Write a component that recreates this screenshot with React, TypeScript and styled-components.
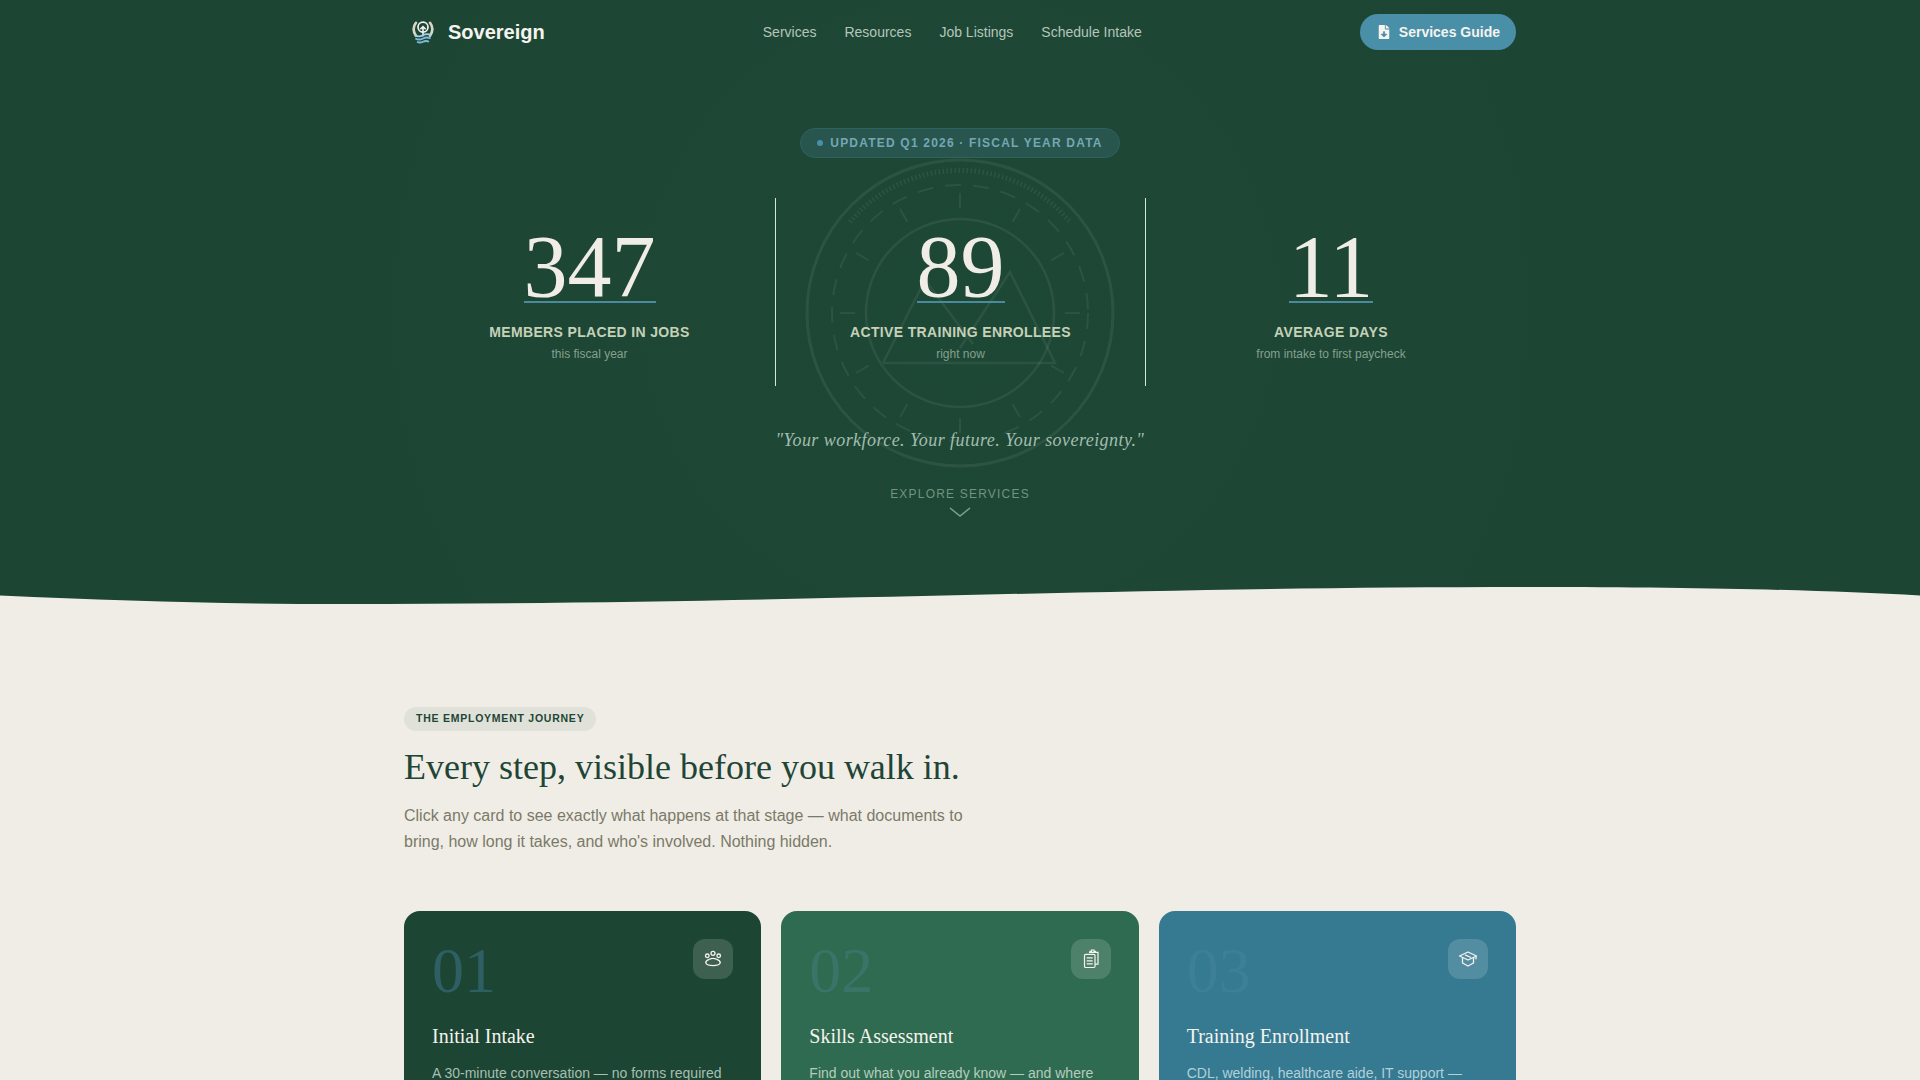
import { Fragment } from "react";
import styled, { createGlobalStyle } from "styled-components";
import { FaFileDownload } from "react-icons/fa";

const GlobalStyle = createGlobalStyle`
  html, body { margin: 0; padding: 0; height: 100%; overflow: hidden; background: #f0ede6; }
  body { font-family: "Liberation Sans", Arial, sans-serif; }
  * { box-sizing: border-box; }
`;

const Page = styled.div`
  height: 1080px;
  overflow: hidden;
  background: #f0ede6;
`;

const Hero = styled.header`
  position: relative;
  height: 620px;
  background: radial-gradient(circle at 50% 50%, #1e4836 0, #1d4534 60%);
  overflow: hidden;
`;

const Seal = styled.svg`
  position: absolute;
  top: 158px;
  left: 50%;
  margin-left: -155px;
  width: 310px;
  height: 310px;
`;

const Wave = styled.svg`
  position: absolute;
  left: 0;
  bottom: 0;
  width: 100%;
  height: 40px;
  display: block;
`;

const Wrap = styled.div`
  position: relative;
  width: 1112px;
  margin: 0 auto;
`;

const Nav = styled.nav`
  height: 64px;
  display: flex;
  align-items: center;
  justify-content: space-between;
`;

const Brand = styled.a`
  display: flex;
  align-items: center;
  gap: 12px;
  padding-left: 6px;
  font-size: 20px;
  font-weight: 700;
  color: #f5f3ee;
`;

const NavLinks = styled.div`
  display: flex;
  gap: 28px;
`;

const NavLink = styled.a`
  font-size: 14px;
  color: #b4c6ba;
`;

const GuideButton = styled.a`
  height: 36px;
  display: flex;
  align-items: center;
  gap: 8px;
  padding: 0 16px 0 17px;
  border-radius: 18px;
  background: #4a8fa8;
  color: #f5f3ee;
  font-size: 14px;
  font-weight: 700;
`;

const BadgeRow = styled.div`
  display: flex;
  justify-content: center;
  margin-top: 64px;
`;

const Badge = styled.div`
  height: 30px;
  display: flex;
  align-items: center;
  gap: 7px;
  padding: 0 16px;
  border-radius: 15px;
  background: #28564f;
  border: 1px solid #2e625c;
  color: #74a7b2;
  font-size: 12px;
  font-weight: 700;
  letter-spacing: 1.2px;
`;

const Dot = styled.span`
  width: 6px;
  height: 6px;
  border-radius: 50%;
  background: #4a8fa8;
`;

const Stats = styled.section`
  display: grid;
  grid-template-columns: 371px 1px 369px 1px 370px;
  height: 188px;
  margin-top: 40px;
`;

const Divider = styled.div`
  background: #d5e6dc;
`;

const Stat = styled.div`
  display: flex;
  flex-direction: column;
  align-items: center;
  padding-top: 25px;
`;

const Number = styled.div`
  position: relative;
  font-family: "Liberation Serif", "Times New Roman", serif;
  font-size: 88px;
  line-height: 88px;
  color: #f0ede6;

  &::after {
    content: "";
    position: absolute;
    left: 0;
    right: 0;
    bottom: 8px;
    height: 2px;
    background: #4a8a9e;
  }
`;

const StatLabel = styled.div`
  margin-top: 11px;
  font-size: 14px;
  line-height: 20px;
  font-weight: 700;
  letter-spacing: 0.34px;
  color: #c5d1b8;
`;

const StatNote = styled.div`
  margin-top: 3px;
  font-size: 12px;
  line-height: 18px;
  color: #84a090;
`;

const Quote = styled.p`
  margin: 42px 0 0;
  text-align: center;
  font-family: "Liberation Serif", "Times New Roman", serif;
  font-style: italic;
  font-size: 18px;
  line-height: 24px;
  letter-spacing: 0.45px;
  color: #a3bdae;
`;

const Explore = styled.div`
  display: flex;
  flex-direction: column;
  align-items: center;
  gap: 5px;
  margin-top: 34px;
  font-size: 12px;
  line-height: 16px;
  letter-spacing: 1.2px;
  color: #72937f;
`;

const Journey = styled.main`
  padding-top: 87px;
`;

const Pill = styled.div`
  display: inline-block;
  height: 24px;
  padding: 0 12px;
  border-radius: 12px;
  background: #e0e1d9;
  color: #1e4535;
  font-size: 10.5px;
  line-height: 23px;
  font-weight: 700;
  letter-spacing: 0.76px;
`;

const Heading = styled.h2`
  margin: 13px 0 0;
  font-family: "Liberation Serif", "Times New Roman", serif;
  font-size: 36px;
  line-height: 46px;
  font-weight: 400;
  color: #1e4535;
`;

const Lead = styled.p`
  margin: 13px 0 0;
  width: 580px;
  font-size: 16px;
  line-height: 26px;
  color: #7a7a68;
`;

const Cards = styled.div`
  display: grid;
  grid-template-columns: repeat(3, 1fr);
  gap: 20px;
  margin-top: 56px;
`;

const Card = styled.article<{ $bg: string }>`
  min-height: 260px;
  padding: 28px;
  border-radius: 16px;
  background: ${(p) => p.$bg};
`;

const CardTop = styled.div`
  display: flex;
  justify-content: space-between;
  align-items: flex-start;
  height: 80px;
`;

const StepNumber = styled.div<{ $color: string }>`
  font-family: "Liberation Serif", "Times New Roman", serif;
  font-size: 64px;
  line-height: 64px;
  color: ${(p) => p.$color};
`;

const IconBox = styled.div`
  width: 40px;
  height: 40px;
  display: flex;
  align-items: center;
  justify-content: center;
  border-radius: 12px;
  background: rgba(255, 255, 255, 0.15);
  color: #f5f3ee;
`;

const CardTitle = styled.h3`
  margin: 4px 0 0;
  font-family: "Liberation Serif", "Times New Roman", serif;
  font-size: 20px;
  line-height: 26px;
  font-weight: 400;
  color: #f5f3ee;
`;

const CardText = styled.p<{ $color: string }>`
  margin: 13px 0 0;
  font-size: 14px;
  line-height: 22px;
  color: ${(p) => p.$color};
`;

const LogoMark = () => (
  <svg width="26" height="26" viewBox="0 0 24 24" fill="none">
    <path d="M5.500 15.500C2.800 11.500 2.800 7 5.500 3.500" stroke="#d9d6c6" strokeWidth="2.400" strokeLinecap="round" />
    <path d="M18.500 15.500C21.200 11.500 21.200 7 18.500 3.500" stroke="#d9d6c6" strokeWidth="2.400" strokeLinecap="round" />
    <circle cx="12" cy="7.500" r="4.600" stroke="#eef2ee" strokeWidth="1.600" />
    <path d="M12 16V7M9.500 9.500 12 7l2.500 2.500" stroke="#eef2ee" strokeWidth="1.500" />
    <path d="M4.500 15c2.500 1.400 5 1.400 7.500 0s5-1.400 7.500 0" stroke="#a5d0e6" strokeWidth="1.800" />
    <path d="M5 18c2.300 1.300 4.700 1.300 7 0s4.700-1.300 7 0" stroke="#7fbadb" strokeWidth="1.800" />
    <path d="M6.500 21c1.800 1 3.700 1 5.500 0s3.700-1 5.500 0" stroke="#7fbadb" strokeWidth="1.800" />
  </svg>
);

const GroupIcon = () => (
  <svg width="20" height="20" viewBox="0 0 20 20" fill="none" stroke="currentColor" strokeWidth="1.300">
    <circle cx="10" cy="4.300" r="2" />
    <circle cx="4.300" cy="6.800" r="1.800" />
    <circle cx="15.700" cy="6.800" r="1.800" />
    <path d="M6.200 10.400c2.400-1.300 5.200-1.300 7.600 0" />
    <path d="M2.700 14c0-2 1.500-3 3.500-3.600M17.300 14c0-2-1.500-3-3.500-3.600" />
    <path d="M2.700 14c2 3.400 12.600 3.400 14.600 0" />
  </svg>
);

const ClipboardsIcon = () => (
  <svg width="20" height="20" viewBox="0 0 20 20" fill="none" stroke="currentColor" strokeWidth="1.200">
    <path d="M9 3.300V2.300h1.500V1h2.500v1.300h1.500v1" />
    <path d="M8 3.300H17V15.200H14" />
    <rect x="3.500" y="5.300" width="10.500" height="13.200" rx="1.200" />
    <path d="M5.700 8.800h6M5.700 11.800h6M5.700 14.800h6" />
  </svg>
);

const CapIcon = () => (
  <svg width="20" height="20" viewBox="0 0 20 20" fill="none" stroke="currentColor" strokeWidth="1.300" strokeLinejoin="round">
    <path d="M10 3 18.500 7 10 11 1.500 7z" />
    <path d="M4.500 8.500v5.500L10 17l5.500-3V8.500" />
    <path d="M18 7.200v3" />
    <path d="M7 5.800l6 2.700" />
  </svg>
);

const seal = () => {
  const ticks = Array.from({ length: 12 }, (_, i) => {
    const a = (i * Math.PI) / 6;
    return (
      <line
        key={i}
        x1={155 + Math.cos(a) * 105}
        y1={155 + Math.sin(a) * 105}
        x2={155 + Math.cos(a) * 120}
        y2={155 + Math.sin(a) * 120}
      />
    );
  });
  return (
    <Seal viewBox="0 0 310 310" fill="none" stroke="#f0ede6" strokeOpacity="0.075">
      <circle cx="155" cy="155" r="153" strokeWidth="3" />
      <path d="M45 64A143 143 0 0 1 265 64" strokeWidth="5" strokeDasharray="1.500 2.500" strokeOpacity="0.08" />
      <circle cx="155" cy="155" r="128" strokeWidth="2" strokeDasharray="16 12" />
      <circle cx="155" cy="155" r="94" strokeWidth="2.500" />
      <g strokeWidth="2">{ticks}</g>
      <path d="M78 205H250L205 114 155 190M78 205 120 122 168 186" strokeWidth="2.500" />
    </Seal>
  );
};

const stats = [
  { value: "347", label: "MEMBERS PLACED IN JOBS", note: "this fiscal year" },
  { value: "89", label: "ACTIVE TRAINING ENROLLEES", note: "right now" },
  { value: "11", label: "AVERAGE DAYS", note: "from intake to first paycheck" },
];

const steps = [
  {
    no: "01",
    title: "Initial Intake",
    text: "A 30-minute conversation — no forms required",
    bg: "#1c4533",
    numberColor: "#2e5f63",
    textColor: "#a6bfb2",
    icon: <GroupIcon />,
  },
  {
    no: "02",
    title: "Skills Assessment",
    text: "Find out what you already know — and where",
    bg: "#2f6b50",
    numberColor: "#3a7468",
    textColor: "#b5cdbf",
    icon: <ClipboardsIcon />,
  },
  {
    no: "03",
    title: "Training Enrollment",
    text: "CDL, welding, healthcare aide, IT support —",
    bg: "#367a92",
    numberColor: "#3c7f96",
    textColor: "#b0d0da",
    icon: <CapIcon />,
  },
];

export default function App() {
  return (
    <Page>
      <GlobalStyle />
      <Hero>
        {seal()}
        <Wrap>
          <Nav>
            <Brand>
              <LogoMark />
              Sovereign
            </Brand>
            <NavLinks>
              <NavLink>Services</NavLink>
              <NavLink>Resources</NavLink>
              <NavLink>Job Listings</NavLink>
              <NavLink>Schedule Intake</NavLink>
            </NavLinks>
            <GuideButton>
              <FaFileDownload size={14} />
              Services Guide
            </GuideButton>
          </Nav>
          <BadgeRow>
            <Badge>
              <Dot />
              UPDATED Q1 2026 · FISCAL YEAR DATA
            </Badge>
          </BadgeRow>
          <Stats>
            {stats.map((s, i) => (
              <Fragment key={s.value}>
                {i > 0 && <Divider />}
                <Stat>
                  <Number>{s.value}</Number>
                  <StatLabel>{s.label}</StatLabel>
                  <StatNote>{s.note}</StatNote>
                </Stat>
              </Fragment>
            ))}
          </Stats>
          <Quote>"Your workforce. Your future. Your sovereignty."</Quote>
          <Explore>
            EXPLORE SERVICES
            <svg width="22" height="10" viewBox="0 0 22 10" fill="none" stroke="#7f9f8e" strokeWidth="1.500">
              <path d="M1 1l10 8 10-8" />
            </svg>
          </Explore>
        </Wrap>
        <Wave viewBox="0 0 1920 40" preserveAspectRatio="none">
          <path
            d="M0 15.500C120 21 230 24 343 24C800 24 1100 7 1530 7C1700 7 1820 10 1920 15.500L1920 40L0 40Z"
            fill="#f0ede6"
          />
        </Wave>
      </Hero>
      <Wrap>
        <Journey>
          <Pill>THE EMPLOYMENT JOURNEY</Pill>
          <Heading>Every step, visible before you walk in.</Heading>
          <Lead>
            Click any card to see exactly what happens at that stage — what documents to bring, how
            long it takes, and who's involved. Nothing hidden.
          </Lead>
          <Cards>
            {steps.map((s) => (
              <Card key={s.no} $bg={s.bg}>
                <CardTop>
                  <StepNumber $color={s.numberColor}>{s.no}</StepNumber>
                  <IconBox>{s.icon}</IconBox>
                </CardTop>
                <CardTitle>{s.title}</CardTitle>
                <CardText $color={s.textColor}>{s.text}</CardText>
              </Card>
            ))}
          </Cards>
        </Journey>
      </Wrap>
    </Page>
  );
}
